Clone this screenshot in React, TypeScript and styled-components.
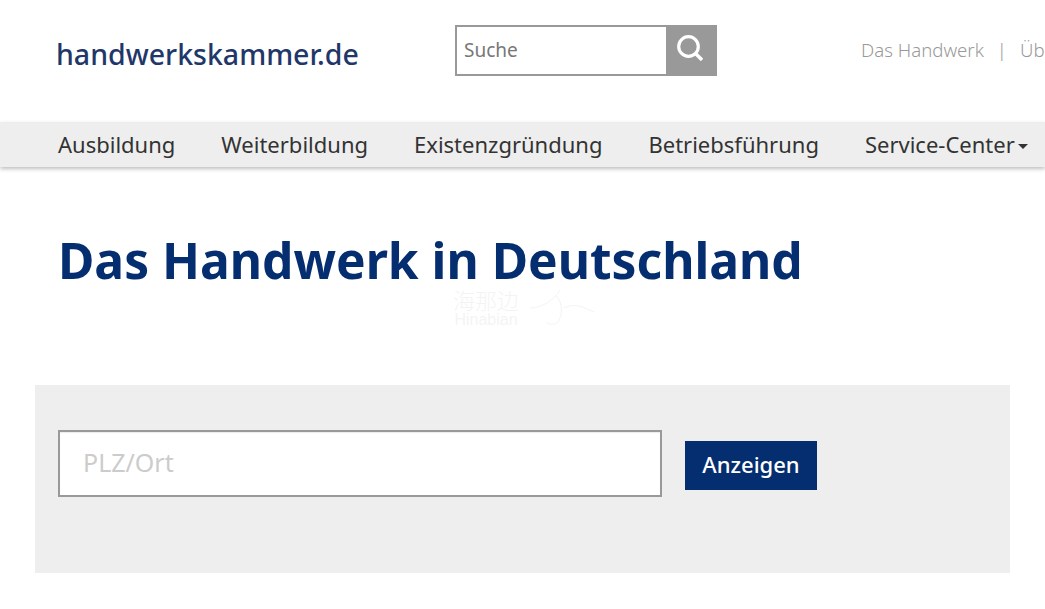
import { createGlobalStyle, styled } from "styled-components";

const GlobalStyle = createGlobalStyle`
  html, body {
    margin: 0;
    padding: 0;
    background: #fff;
    overflow: hidden;
    font-family: "Noto Sans", "Open Sans", sans-serif;
  }
`;

const Page = styled.div`
  position: relative;
  width: 1045px;
  height: 609px;
  overflow: hidden;
`;

const Header = styled.header`
  display: flex;
  align-items: flex-start;
  height: 122px;
  box-sizing: border-box;
  padding-top: 25px;
  white-space: nowrap;
`;

const Logo = styled.a`
  flex: none;
  width: 455px;
  padding: 9px 0 0 56px;
  box-sizing: border-box;
  font-size: 28.5px;
  line-height: 40px;
  font-weight: 500;
  color: #1f3769;
`;

const SearchForm = styled.form`
  display: flex;
  flex: none;
  width: 262px;
  height: 51px;
`;

const SearchInput = styled.input`
  width: 211px;
  height: 100%;
  box-sizing: border-box;
  border: 2px solid #999;
  border-right: none;
  border-radius: 0;
  outline: none;
  padding: 0 7px 2px;
  font: 19px "Noto Sans", sans-serif;
  color: #777;

  &::placeholder {
    color: #777;
    opacity: 1;
  }
`;

const SearchButton = styled.button`
  display: flex;
  align-items: center;
  justify-content: center;
  width: 51px;
  height: 100%;
  padding: 0 3px 5px 0;
  border: none;
  background: #999;
`;

const MetaNav = styled.nav`
  display: flex;
  flex: none;
  margin-left: 144px;
  height: 49px;
  align-items: center;
  font-size: 18.6px;
  font-weight: 300;
  color: #999;
`;

const MetaDivider = styled.span`
  margin: 0 13px;
`;

const MainNav = styled.nav`
  display: flex;
  align-items: center;
  gap: 46px;
  height: 45px;
  box-sizing: border-box;
  padding: 0 0 1px 58px;
  background: #eee;
  box-shadow: 0 2px 4px rgba(0, 0, 0, 0.25);
  white-space: nowrap;
`;

const NavLink = styled.a`
  display: flex;
  align-items: center;
  font-size: 22px;
  color: #333;
`;

const Caret = styled.span`
  margin: 4px 0 0 3px;
  border-top: 5px solid #333;
  border-left: 5.5px solid transparent;
  border-right: 5.5px solid transparent;
`;

const Title = styled.h1`
  margin: 62px 0 0 58px;
  font-size: 49.7px;
  line-height: 62px;
  font-weight: 700;
  color: #052e70;
  white-space: nowrap;
`;

const Panel = styled.section`
  display: flex;
  align-items: flex-start;
  gap: 23px;
  width: 975px;
  height: 188px;
  margin: 94px 0 0 35px;
  box-sizing: border-box;
  padding: 45px 0 0 23px;
  background: #eee;
`;

const PlaceInput = styled.input`
  width: 604px;
  height: 67px;
  box-sizing: border-box;
  border: 2px solid #999;
  border-radius: 0;
  outline: none;
  padding: 0 23px 3px;
  background: #fff;
  box-shadow: inset 0 1px 1px rgba(0, 0, 0, 0.08);
  font: 25px "Noto Sans", sans-serif;

  &::placeholder {
    color: #ccc;
    opacity: 1;
  }
`;

const SubmitButton = styled.button`
  width: 132px;
  height: 49px;
  margin-top: 11px;
  padding: 0 0 3px;
  border: none;
  border-radius: 0;
  background: #052e70;
  color: #fff;
  font: 500 22px "Noto Sans", sans-serif;
`;

const Watermark = styled.div`
  position: absolute;
  left: 450px;
  top: 286px;
  display: flex;
  gap: 8px;
  opacity: 0.09;
  color: #888;
  pointer-events: none;
`;

const WatermarkText = styled.div`
  width: 72px;
  text-align: center;
`;

const WatermarkCn = styled.div`
  font: 200 22px/26px "Noto Sans CJK SC", sans-serif;
`;

const WatermarkEn = styled.div`
  font: 16px/16px "Liberation Sans", sans-serif;
`;

export default function App() {
  return (
    <Page>
      <GlobalStyle />
      <Header>
        <Logo>handwerkskammer.de</Logo>
        <SearchForm onSubmit={(e) => e.preventDefault()}>
          <SearchInput placeholder="Suche" />
          <SearchButton type="submit" aria-label="Suche">
            <svg width="26" height="26" viewBox="0 0 26 26" fill="none" stroke="#fff">
              <circle cx="11.5" cy="11.5" r="9.8" strokeWidth="3.2" />
              <path d="M18.5 18.5 L25 25" strokeWidth="3.4" />
            </svg>
          </SearchButton>
        </SearchForm>
        <MetaNav>
          <span>Das Handwerk</span>
          <MetaDivider>|</MetaDivider>
          <span>Über uns</span>
        </MetaNav>
      </Header>
      <MainNav>
        <NavLink>Ausbildung</NavLink>
        <NavLink>Weiterbildung</NavLink>
        <NavLink>Existenzgründung</NavLink>
        <NavLink>Betriebsführung</NavLink>
        <NavLink>
          Service-Center
          <Caret />
        </NavLink>
      </MainNav>
      <Title>Das Handwerk in Deutschland</Title>
      <Watermark>
        <WatermarkText>
          <WatermarkCn>海那边</WatermarkCn>
          <WatermarkEn>Hinabian</WatermarkEn>
        </WatermarkText>
        <svg width="66" height="42" viewBox="0 0 66 42" fill="none" stroke="#888">
          <path d="M0 22 C12 22 24 14 30 4 M26 10 C34 18 32 30 28 36 C24 40 18 38 16 36 M34 22 C46 16 54 22 64 26" />
        </svg>
      </Watermark>
      <Panel>
        <PlaceInput placeholder="PLZ/Ort" />
        <SubmitButton type="button">Anzeigen</SubmitButton>
      </Panel>
    </Page>
  );
}
